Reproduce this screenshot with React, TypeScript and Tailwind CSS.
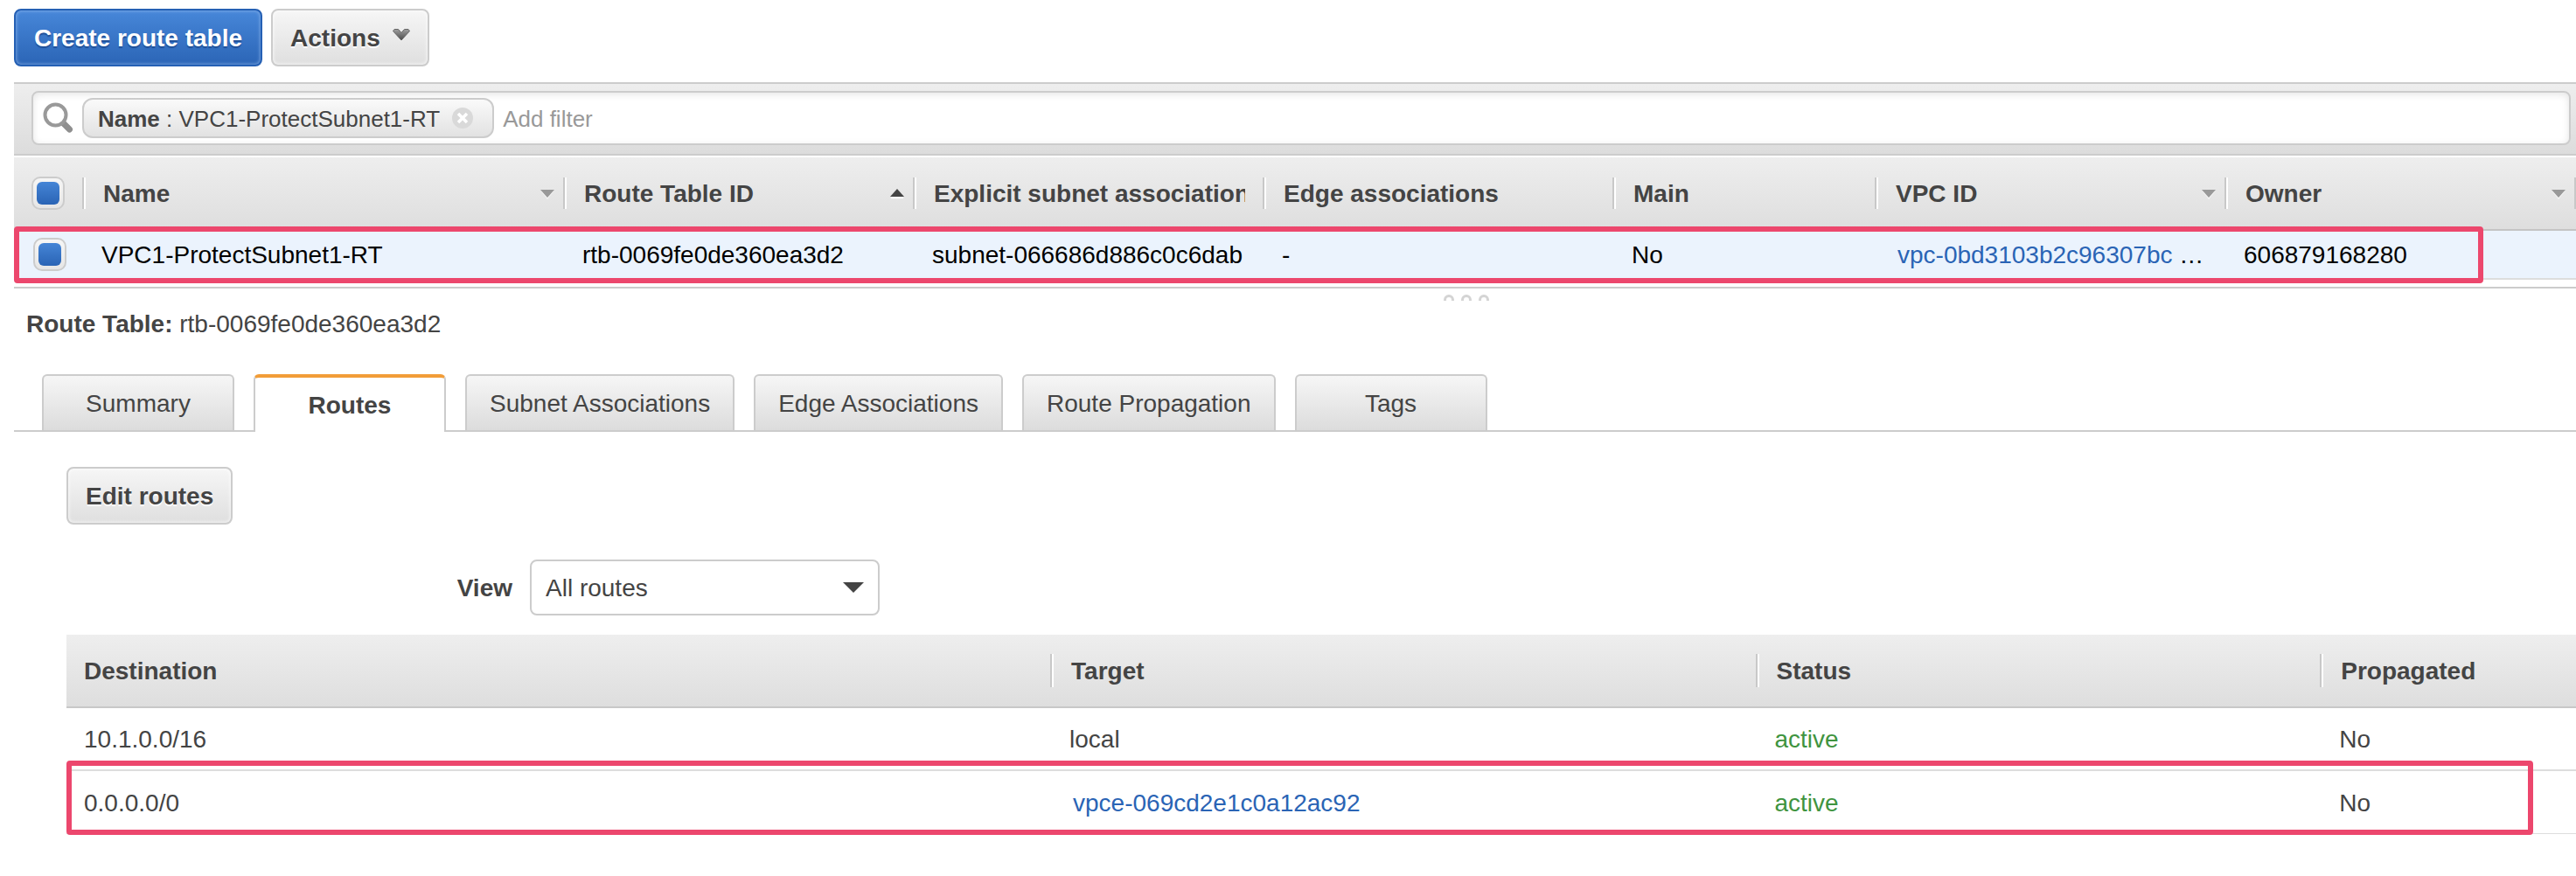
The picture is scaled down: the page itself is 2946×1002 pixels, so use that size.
import React from "react";

const columns: { label: string; sort?: "up" | "down" }[] = [
  { label: "Name", sort: "down" },
  { label: "Route Table ID", sort: "up" },
  { label: "Explicit subnet associations" },
  { label: "Edge associations" },
  { label: "Main" },
  { label: "VPC ID", sort: "down" },
  { label: "Owner", sort: "down" },
];

const tabs = [
  "Summary",
  "Routes",
  "Subnet Associations",
  "Edge Associations",
  "Route Propagation",
  "Tags",
];

const routes = [
  { destination: "10.1.0.0/16", target: "local", link: false, status: "active", propagated: "No" },
  { destination: "0.0.0.0/0", target: "vpce-069cd2e1c0a12ac92", link: true, status: "active", propagated: "No" },
];

function SearchIcon() {
  return (
    <svg className="size-9 shrink-0" viewBox="0 0 36 36" fill="none" aria-hidden="true">
      <path d="M24 23.5 31.5 31" stroke="#8f8f8f" strokeWidth="7" strokeLinecap="round" />
      <circle cx="15.5" cy="14.5" r="12" fill="#fff" stroke="#999" strokeWidth="4" />
    </svg>
  );
}

function ChevronIcon() {
  return (
    <svg className="-mt-2 h-3.5 w-5" viewBox="0 0 20 14" aria-hidden="true">
      <defs>
        <linearGradient id="chevron" x1="0" y1="0" x2="0" y2="1">
          <stop offset="0" stopColor="#a0a0a0" />
          <stop offset="1" stopColor="#4a4a4a" />
        </linearGradient>
      </defs>
      <path d="M.5 2.500 2 .5h4.500L10 4.500 13.500.5H18l1.500 2L10 13z" fill="url(#chevron)" stroke="#666" />
    </svg>
  );
}

function SortIcon({ dir }: { dir: "up" | "down" }) {
  return dir === "up" ? (
    <svg className="h-3 w-4 shrink-0" viewBox="0 0 16 12" aria-hidden="true">
      <path d="M1 9h14v2H1z" fill="#fff" />
      <path d="M0 9 8 0l8 9z" fill="#444" />
    </svg>
  ) : (
    <svg className="h-3 w-4 shrink-0" viewBox="0 0 16 12" aria-hidden="true">
      <path d="M0 2h16L8 12z" fill="#f4f4f4" />
      <path d="M0 1h16L8 10z" fill="#999" />
    </svg>
  );
}

function Checkbox({ label }: { label: string }) {
  return (
    <input
      type="checkbox"
      defaultChecked
      aria-label={label}
      className="flex size-[38px] appearance-none items-center justify-center rounded-[10px] border-2 border-[#ccc] bg-linear-to-b from-[#f6f6f6] to-[#e6e6e6] before:size-[26px] before:rounded-md before:content-[''] checked:before:bg-linear-to-b checked:before:from-[#4585d6] checked:before:to-[#2a64b5]"
    />
  );
}

const greyButton =
  "flex h-[66px] items-center rounded-lg border-2 border-[#ccc] bg-linear-to-b from-[#f6f6f6] to-[#dfdfdf] px-5 pt-0.5 font-bold shadow-[inset_0_0_4px_#fff] text-shadow-[0_2px_0_#fff]";

export default function App() {
  return (
    <main className="bg-white pt-2.5 pb-12 pl-4 font-['Liberation_Sans',Arial,sans-serif] text-[28px] leading-9 text-[#444]">
      <div className="flex gap-2.5">
        <button
          type="button"
          className="flex h-[66px] items-center rounded-lg border-2 border-[#2560b4] bg-linear-to-b from-[#4787d9] to-[#2b65b6] px-[21px] pt-0.5 font-bold text-white shadow-[inset_0_0_4px_#8fb6ea] text-shadow-[0_2px_1px_#1f4f97]"
        >
          Create route table
        </button>
        <button type="button" className={greyButton + " gap-3.5"}>
          Actions
          <ChevronIcon />
        </button>
      </div>

      <div className="mt-[18px] border-y-2 border-[#ccc] bg-linear-to-b from-[#eee] to-[#dcdcdc] pt-2 pr-1.5 pb-2.5 pl-5">
        <div className="flex h-[62px] items-center rounded-lg border-2 border-[#ccc] bg-white pl-2.5 text-[26px] shadow-[inset_0_2px_8px_#e4e4e4]">
          <SearchIcon />
          <div className="ml-2.5 flex h-[46px] shrink-0 items-center rounded-xl border-2 border-[#ccc] bg-linear-to-b from-[#fafafa] to-[#e2e2e2] pr-[22px] pl-4">
            <span className="pt-0.5 whitespace-pre">
              <b>Name</b> : VPC1-ProtectSubnet1-RT
            </span>
            <button type="button" aria-label="Remove filter" className="ml-3.5">
              <svg className="size-6" viewBox="0 0 24 24" aria-hidden="true">
                <circle cx="12" cy="12" r="12" fill="#d9d9d9" />
                <path d="m7 7 10 10M17 7 7 17" stroke="#fff" strokeWidth="3.500" />
              </svg>
            </button>
          </div>
          <input
            type="text"
            aria-label="Add filter"
            placeholder="Add filter"
            className="ml-2.5 h-full min-w-0 flex-1 bg-transparent pt-0.5 outline-none placeholder:text-[#999]"
          />
        </div>
      </div>

      <div className="relative mt-0.5 border-b-2 border-[#ccc] pb-2">
        <table className="w-full table-fixed border-separate border-spacing-0 text-left whitespace-nowrap">
          <colgroup>
            <col className="w-[78px]" />
            <col className="w-[550px]" />
            <col className="w-[400px]" />
            <col className="w-[400px]" />
            <col className="w-[400px]" />
            <col className="w-[300px]" />
            <col className="w-[400px]" />
            <col className="w-[400px]" />
            <col />
          </colgroup>
          <thead>
            <tr>
              <th className="h-[84px] border-b-2 border-[#c4c4c4] bg-linear-to-b from-[#eee] to-[#dedede] p-0 pl-5">
                <Checkbox label="Select all route tables" />
              </th>
              {columns.map((c) => (
                <th key={c.label} className="border-b-2 border-[#c4c4c4] bg-linear-to-b from-[#eee] to-[#dedede] p-0">
                  <div className="flex h-9 items-center justify-between border-l-2 border-[#c8c8c8] pt-0.5 pr-2.5 pl-[22px] shadow-[inset_2px_0_0_#fff]">
                    <span className={c.sort ? "" : "mr-2.5 overflow-hidden"}>{c.label}</span>
                    {c.sort && <SortIcon dir={c.sort} />}
                  </div>
                </th>
              ))}
              <td className="overflow-hidden border-b-2 border-[#c4c4c4] bg-linear-to-b from-[#eee] to-[#dedede] p-0">
                <div className="h-9 border-l-2 border-[#c8c8c8]" />
              </td>
            </tr>
          </thead>
          <tbody className="text-black [&_td]:border-b-2 [&_td]:border-[#ddd] [&_td]:bg-[#ebf3fd] [&_td]:p-0 [&_td]:pt-0.5 [&_td]:pl-[22px] [&_td:first-child]:pt-0">
            <tr>
              <td className="h-14">
                <Checkbox label="Select VPC1-ProtectSubnet1-RT" />
              </td>
              <td>VPC1-ProtectSubnet1-RT</td>
              <td>rtb-0069fe0de360ea3d2</td>
              <td>subnet-066686d886c0c6dab</td>
              <td>-</td>
              <td>No</td>
              <td>
                <a href="#vpc" className="ml-1 text-[#2a64b5]">
                  vpc-0bd3103b2c96307bc
                </a>{" "}
                …
              </td>
              <td>606879168280</td>
              <td className="overflow-hidden" />
            </tr>
          </tbody>
        </table>
        <div className="pointer-events-none absolute right-[106px] bottom-1 left-0 h-[65px] rounded-sm border-6 border-[#ec476d]" />
      </div>

      <section>
        <div className="mt-[7px] ml-[55.8%] flex h-[7px] gap-2 overflow-hidden">
          <i className="size-3 shrink-0 rounded-full border-3 border-[#d4d4d4]" />
          <i className="size-3 shrink-0 rounded-full border-3 border-[#d4d4d4]" />
          <i className="size-3 shrink-0 rounded-full border-3 border-[#d4d4d4]" />
        </div>
        <h2 className="mt-[9px] pl-3.5">
          <b>Route Table:</b> rtb-0069fe0de360ea3d2
        </h2>

        <div role="tablist" className="mt-[39px] flex h-[66px] items-stretch border-b-2 border-[#ccc] pl-8">
          {tabs.map((t) =>
            t === "Routes" ? (
              <button
                key={t}
                type="button"
                role="tab"
                aria-selected="true"
                className="-mb-0.5 mr-[22px] min-w-[220px] rounded-t-md border-x-2 border-t-4 border-x-[#ccc] border-t-[#f29d38] bg-white px-[26px] pt-0.5 font-bold"
              >
                {t}
              </button>
            ) : (
              <button
                key={t}
                type="button"
                role="tab"
                aria-selected="false"
                className="mr-[22px] min-w-[220px] rounded-t-md border-2 border-b-0 border-[#ccc] bg-linear-to-b from-[#f6f6f6] to-[#dcdcdc] px-[26px] pt-0.5 whitespace-nowrap"
              >
                {t}
              </button>
            ),
          )}
        </div>

        <div className="pt-10 pl-[60px]">
          <button type="button" className={greyButton}>
            Edit routes
          </button>

          <div className="mt-10 flex items-center gap-5">
            <label htmlFor="view" className="w-[510px] pt-0.5 text-right font-bold">
              View
            </label>
            <div className="relative">
              <select
                id="view"
                className="h-16 w-[400px] appearance-none rounded-lg border-2 border-[#ccc] bg-white pt-0.5 pr-12 pl-4"
              >
                <option>All routes</option>
              </select>
              <svg
                className="pointer-events-none absolute top-[26px] right-[18px] h-3 w-6"
                viewBox="0 0 24 12"
                aria-hidden="true"
              >
                <path d="M0 0h24L12 12z" fill="#444" />
              </svg>
            </div>
          </div>

          <div className="relative mt-[22px]">
            <table className="w-full table-fixed border-separate border-spacing-0 text-left">
              <thead className="[&_th]:border-b-2 [&_th]:border-[#c8c8c8] [&_th]:bg-linear-to-b [&_th]:from-[#eee] [&_th]:to-[#dedede] [&_th]:p-0">
                <tr>
                  <th className="h-[84px] w-[39.2%]">
                    <div className="pt-0.5 pl-5">Destination</div>
                  </th>
                  <th className="w-[28.1%]">
                    <div className="border-l-2 border-[#c8c8c8] pt-0.5 pl-[22px] shadow-[inset_2px_0_0_#fff]">Target</div>
                  </th>
                  <th className="w-[22.5%]">
                    <div className="border-l-2 border-[#c8c8c8] pt-0.5 pl-[22px] shadow-[inset_2px_0_0_#fff]">Status</div>
                  </th>
                  <th>
                    <div className="border-l-2 border-[#c8c8c8] pt-0.5 pl-[22px] shadow-[inset_2px_0_0_#fff]">Propagated</div>
                  </th>
                </tr>
              </thead>
              <tbody className="[&_td]:h-[72px] [&_td]:border-b-2 [&_td]:border-[#ddd] [&_td]:p-0 [&_td]:pt-0.5 [&_td]:pl-[22px] [&_td:first-child]:pl-5 [&_tr:last-child_td]:border-b">
                {routes.map((r) => (
                  <tr key={r.destination}>
                    <td>{r.destination}</td>
                    <td>
                      {r.link ? (
                        <a href="#endpoint" className="ml-1 text-[#2a64b5]">
                          {r.target}
                        </a>
                      ) : (
                        r.target
                      )}
                    </td>
                    <td className="text-[#3f9440]">{r.status}</td>
                    <td>{r.propagated}</td>
                  </tr>
                ))}
              </tbody>
            </table>
            <div className="pointer-events-none absolute right-[49px] -bottom-px left-0 h-[85px] rounded-sm border-6 border-[#ec476d]" />
          </div>
        </div>
      </section>
    </main>
  );
}
